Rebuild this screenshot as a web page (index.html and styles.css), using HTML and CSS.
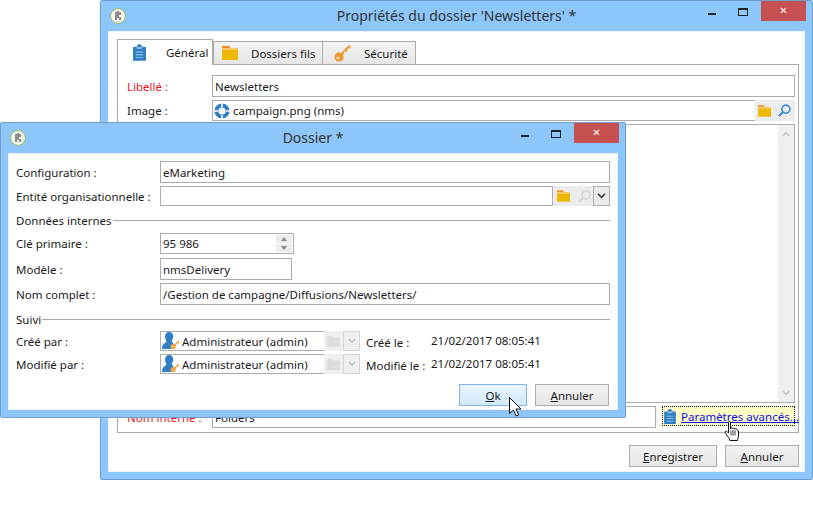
FILE: index.html
```html
<!DOCTYPE html>
<html lang="fr">
<head>
<meta charset="utf-8">
<title>Dossier</title>
<link rel="stylesheet" href="styles.css">
</head>
<body>
<svg class="defs" width="0" height="0" aria-hidden="true">
  <defs>
    <symbol id="clip" viewBox="0 0 14 18">
      <path d="M0 3h4V1.5h1.5V0h3v1.5H10V3h4v15H0z" fill="#2f7fc6"/>
      <path d="M4 3h6v2H4z" fill="#8fc0ea"/>
      <path d="M3 8h8v1H3zM3 11h8v1H3zM3 14h8v1H3z" fill="#a9d0f0"/>
    </symbol>
    <symbol id="folder" viewBox="0 0 16 14">
      <path d="M0 0h8v2H0z" fill="#f28c1e"/>
      <path d="M0 2h16v2H0z" fill="#f6c86a"/>
      <path d="M0 4h16v10H0z" fill="#efb800"/>
    </symbol>
    <symbol id="greyfolder" viewBox="0 0 16 14">
      <path d="M0 0h7v2h9v12H0z" fill="#dcdcdc"/>
    </symbol>
    <symbol id="key" viewBox="0 0 18 18">
      <circle cx="5" cy="13" r="4.6" fill="#ee9a2e"/>
      <circle cx="4" cy="14" r="1.3" fill="#f5f5f5"/>
      <path d="M6 10 15 1l2 2-2 2-1-1-1 1 1 1-2 2-1-1-2 4z" fill="#ee9a2e"/>
    </symbol>
    <symbol id="lens" viewBox="0 0 14 14">
      <circle cx="8.5" cy="5.5" r="4.3" fill="none" stroke="currentColor" stroke-width="1.8"/>
      <path d="M5.6 8.4 1 13" stroke="currentColor" stroke-width="2.4" fill="none"/>
    </symbol>
    <symbol id="chev" viewBox="0 0 10 7">
      <path d="M1 1l4 4 4-4" fill="none" stroke="currentColor" stroke-width="2"/>
    </symbol>
    <symbol id="user" viewBox="0 0 18 18">
      <path d="M7 0c3 0 4.500 2 4.200 5-.2 2-1 3.200-1.500 4 .3 1 1 1.500 1.800 2L9 17H0c0-3.500 1-5 3-6 .8-.5 1.200-1 1.300-2C3.400 7.500 3 6 3 4.500 3 2 4.500 0 7 0z" fill="#2f7fc6"/>
      <circle cx="11" cy="14.500" r="2.600" fill="#ee9a2e"/>
      <circle cx="10.800" cy="14.800" r=".8" fill="#fff"/>
      <path d="M12 13l4-4 1.500 1.500-1 1-1-.5-.5 1-1 .5-1 2z" fill="#ee9a2e"/>
    </symbol>
    <symbol id="logo" viewBox="0 0 16 16">
      <circle cx="8" cy="8" r="7.400" fill="#f4f6ee" stroke="#9dbb5c" stroke-width="1"/>
      <path d="M6 4v8M8 3v7M10 4v3M10 9v3" stroke="#555" stroke-width="1.300" fill="none"/>
    </symbol>
  </defs>
</svg>

<section class="win win-main">
  <header class="titlebar">
    <svg class="logo"><use href="#logo"/></svg>
    <h1 class="title">Propriétés du dossier 'Newsletters' *</h1>
    <div class="controls">
      <span class="ctl-min"></span>
      <span class="ctl-max"></span>
      <span class="ctl-close">✕</span>
    </div>
  </header>
  <div class="client client-main">
    <nav class="tabs">
      <div class="tab tab-active"><svg class="tab-ico"><use href="#clip"/></svg><span>Général</span></div>
      <div class="tab tab-2"><svg class="tab-ico-f"><use href="#folder"/></svg><span>Dossiers fils</span></div>
      <div class="tab tab-3"><svg class="tab-ico-k"><use href="#key"/></svg><span>Sécurité</span></div>
    </nav>
    <div class="panel">
      <div class="mrow mrow-libelle">
        <label class="mlabel req">Libellé :</label>
        <div class="field grow">Newsletters</div>
      </div>
      <div class="mrow mrow-image">
        <label class="mlabel">Image :</label>
        <div class="field grow field-ico"><svg class="camp" viewBox="0 0 16 16"><circle cx="8" cy="8" r="5.600" fill="none" stroke="#2f7fc6" stroke-width="4"/><path d="M8 0v4M8 12v4M0 8h4M12 8h4" stroke="#fff" stroke-width="1.600"/></svg>campaign.png (nms)</div>
        <div class="iconbtns">
          <svg class="ib-f"><use href="#folder"/></svg>
          <svg class="ib-l lens-blue"><use href="#lens"/></svg>
        </div>
      </div>
      <div class="bigbox">
        <div class="scroll">
          <svg class="sc-up"><use href="#chev"/></svg>
          <svg class="sc-down"><use href="#chev"/></svg>
        </div>
      </div>
      <div class="mrow mrow-nom">
        <label class="mlabel req">Nom interne :</label>
        <div class="field grow">Folders</div>
        <div class="advanced">
          <svg class="adv-ico"><use href="#clip"/></svg>
          <a class="adv-link" href="#">Paramètres avancés...</a>
        </div>
      </div>
    </div>
    <footer class="actions actions-main">
      <button class="btn btn-save"><u>E</u>nregistrer</button>
      <button class="btn btn-cancel"><u>A</u>nnuler</button>
    </footer>
  </div>
</section>

<section class="win win-dlg">
  <header class="titlebar">
    <svg class="logo"><use href="#logo"/></svg>
    <h1 class="title title-dlg">Dossier *</h1>
    <div class="controls">
      <span class="ctl-min"></span>
      <span class="ctl-max"></span>
      <span class="ctl-close">✕</span>
    </div>
  </header>
  <div class="client client-dlg">
    <div class="drow r-conf">
      <label class="dlabel">Configuration :</label>
      <div class="field grow">eMarketing</div>
    </div>
    <div class="drow r-ent">
      <label class="dlabel">Entité organisationnelle :</label>
      <div class="field grow"></div>
      <div class="iconbtns ib-ent">
        <svg class="ib-f"><use href="#folder"/></svg>
        <svg class="ib-l lens-grey"><use href="#lens"/></svg>
      </div>
      <div class="dropbtn"><svg class="drop-chev"><use href="#chev"/></svg></div>
    </div>
    <div class="legend leg-1"><span>Données internes</span><i></i></div>
    <div class="drow r-cle">
      <label class="dlabel">Clé primaire :</label>
      <div class="field spin">95 986
        <div class="spinbtns">
          <span class="spin-b"><b class="arrow-up"></b></span>
          <span class="spin-b"><b class="arrow-down"></b></span>
        </div>
      </div>
    </div>
    <div class="drow r-mod">
      <label class="dlabel">Modèle :</label>
      <div class="field model">nmsDelivery</div>
    </div>
    <div class="drow r-nom">
      <label class="dlabel">Nom complet :</label>
      <div class="field grow">/Gestion de campagne/Diffusions/Newsletters/</div>
    </div>
    <div class="legend leg-2"><span>Suivi</span><i></i></div>
    <div class="drow r-cree">
      <label class="dlabel">Créé par :</label>
      <div class="field user"><svg class="user-ico"><use href="#user"/></svg>Administrateur (admin)</div>
      <div class="userbtns">
        <span class="ub-f"><svg class="ub-folder"><use href="#greyfolder"/></svg></span>
        <span class="ub-c"><svg class="ub-chev"><use href="#chev"/></svg></span>
      </div>
      <label class="datel">Créé le :</label>
      <span class="dateval">21/02/2017 08:05:41</span>
    </div>
    <div class="drow r-modif">
      <label class="dlabel">Modifié par :</label>
      <div class="field user"><svg class="user-ico"><use href="#user"/></svg>Administrateur (admin)</div>
      <div class="userbtns">
        <span class="ub-f"><svg class="ub-folder"><use href="#greyfolder"/></svg></span>
        <span class="ub-c"><svg class="ub-chev"><use href="#chev"/></svg></span>
      </div>
      <label class="datel">Modifié le :</label>
      <span class="dateval">21/02/2017 08:05:41</span>
    </div>
    <footer class="actions actions-dlg">
      <button class="btn btn-ok"><u>O</u>k</button>
      <button class="btn btn-cancel2"><u>A</u>nnuler</button>
    </footer>
  </div>
</section>

<svg class="cursor cur-arrow" viewBox="0 0 13 20"><path d="M.5.500v16l4-3.500 2.700 6 2.500-1-2.700-6H12z" fill="#fff" stroke="#111" stroke-width="1"/></svg>
<svg class="cursor cur-hand" viewBox="0 0 17 21"><path d="M4.500 1.500c0-1.300 2-1.300 2 0V8l.5-.8c.5-.7 2-.5 2 .5.500-.8 2-.6 2 .5.600-.7 2-.5 2 .5l.5.300c.8.500 1 1 1 2v4c0 1.500-1 2.500-1 4.500H6c-.5-2-2-3.500-4-6.500-1.200-1.800-.8-3 0-3 .8 0 1.700 1.200 2.500 2z" fill="#fff" stroke="#111" stroke-width="1"/><path d="M7 9.500v5M9 9v5.500M11 9.500v5" stroke="#111" stroke-width=".8" fill="none"/></svg>
</body>
</html>
```
FILE: styles.css
```css
* { box-sizing: border-box; }
html, body { margin: 0; padding: 0; }
body {
  width: 813px;
  height: 514px;
  position: relative;
  overflow: hidden;
  background: #fff;
  font-family: "Noto Sans", "Open Sans", sans-serif;
  font-size: 11.5px;
  color: #1a1a1a;
}
.defs { position: absolute; }

.win {
  position: absolute;
  display: flex;
  flex-direction: column;
  background: #8cc6fa;
  border: 1px solid #6e9fcb;
  border-radius: 2px;
  padding: 0 7px 7px;
}
.win-main { left: 100px; top: 0; width: 713px; height: 480px; }
.win-dlg { left: 0; top: 122px; width: 626px; height: 296px; }

.titlebar {
  position: relative;
  flex: none;
  height: 30px;
  display: flex;
  align-items: center;
  justify-content: center;
}
.logo { position: absolute; left: 2px; top: 7px; width: 16px; height: 16px; }
.title {
  margin: 0;
  font-size: 14px;
  font-weight: 400;
  color: #333;
  line-height: 1;
  padding-bottom: 1px;
}
.controls {
  position: absolute;
  right: -1px;
  top: 0;
  display: flex;
  height: 20px;
}
.ctl-min { width: 8px; height: 2px; background: #222; margin: 12px 22px 0 0; }
.ctl-max { width: 10px; height: 8px; border: 1px solid #222; border-top-width: 2px; margin: 7px 13px 0 0; }
.ctl-close {
  width: 45px;
  height: 20px;
  background: #c75050;
  color: #fff;
  font-size: 10px;
  font-weight: 700;
  line-height: 20px;
  text-align: center;
  font-family: "DejaVu Sans", sans-serif;
}

.client {
  flex: 1;
  min-height: 0;
  display: flex;
  flex-direction: column;
  background: #fff;
  border: 1px solid #f0f0f0;
}
.client-main { padding: 7px 5px 5px 8px; }

.tabs { display: flex; align-items: flex-end; height: 25px; flex: none; position: relative; z-index: 1; }
.tab {
  display: flex;
  align-items: center;
  height: 23px;
  background: linear-gradient(#f3f3f3, #e6e6e6);
  border: 1px solid #acacac;
  border-bottom: none;
  margin-right: 0;
  color: #1a1a1a;
}
.tab-active { width: 96px; height: 26px; margin-bottom: -1px; background: #fff; padding-left: 15px; }
.tab-2 { width: 110px; padding-left: 8px; border-left-width: 1px; }
.tab-3 { width: 94px; padding-left: 11px; margin-left: -1px; }
.tab-ico { width: 13px; height: 17px; margin-right: 20px; }
.tab-ico-f { width: 16px; height: 14px; margin-right: 13px; }
.tab-ico-k { width: 18px; height: 18px; margin-right: 12px; }

.panel {
  flex: none;
  height: 369px;
  border: 1px solid #acacac;
  padding: 10px 3px 4px 9px;
  display: flex;
  flex-direction: column;
}
.mrow { display: flex; align-items: center; flex: none; }
.mrow-libelle { height: 22px; }
.mrow-image { height: 21px; margin-top: 3px; }
.mrow-nom { height: 22px; margin-top: 3px; }
.mlabel { width: 85px; flex: none; }
.req { color: #f0141e; }
.field {
  height: 100%;
  border: 1px solid #acacac;
  background: #fff;
  display: flex;
  align-items: center;
  padding-left: 2px;
  white-space: nowrap;
  min-width: 0;
}
.grow { flex: 1; }
.field-ico { gap: 3px; padding-left: 1px; border-right: none; }
.camp { width: 16px; height: 16px; flex: none; }
.iconbtns {
  flex: none;
  width: 40px;
  height: 100%;
  background: #ececec;
  display: flex;
  align-items: center;
  gap: 7px;
  padding-left: 3px;
}
.ib-f { width: 13px; height: 12px; flex: none; }
.ib-l { width: 13px; height: 13px; flex: none; }
.lens-blue { color: #3f8ddb; }
.lens-grey { color: #d6d6d6; }

.bigbox {
  flex: 1;
  margin: 3px 0 0 85px;
  border: 1px solid #acacac;
  display: flex;
  justify-content: flex-end;
}
.scroll {
  width: 16px;
  background: #efefef;
  display: flex;
  flex-direction: column;
  justify-content: space-between;
  align-items: center;
  color: #c4c4c4;
  padding: 6px 0;
}
.sc-up { width: 8px; height: 6px; transform: rotate(180deg); }
.sc-down { width: 8px; height: 6px; }

.advanced {
  flex: none;
  width: 133px;
  height: 20px;
  margin-left: 6px;
  align-self: flex-start;
  border: 1px dotted #111;
  background: #ffffc4;
  display: flex;
  align-items: center;
  padding-left: 1px;
  gap: 5px;
}
.adv-ico { width: 12px; height: 15px; flex: none; }
.adv-link { color: #0a0aee; white-space: nowrap; }

.actions { display: flex; justify-content: flex-end; flex: none; }
.actions-main { margin-top: 12px; gap: 8px; padding-right: 0; }
.btn {
  font: inherit;
  height: 22px;
  padding: 0;
  border: 1px solid #acacac;
  background: linear-gradient(#f2f2f2, #e6e6e6);
  color: #1a1a1a;
}
.btn-save { width: 88px; }
.btn-cancel { width: 74px; }
.btn-ok { width: 68px; background: linear-gradient(#eaf5fe, #d3e9fb); border-color: #7eb4ea; }
.btn-cancel2 { width: 74px; }

.client-dlg { padding: 7px 7px 4px 7px; }
.drow { display: flex; align-items: center; flex: none; }
.dlabel { width: 144px; flex: none; white-space: nowrap; }
.r-conf { height: 22px; }
.r-ent { height: 20px; margin-top: 3px; }
.legend { display: flex; align-items: center; gap: 1px; flex: none; height: 14px; }
.legend i { flex: 1; height: 1px; background: #a9a9a9; }
.leg-1 { margin-top: 7px; }
.r-cle { height: 21px; margin-top: 6px; }
.r-mod { height: 22px; margin-top: 4px; }
.r-nom { height: 22px; margin-top: 3px; }
.leg-2 { margin-top: 7px; }
.r-cree { height: 20px; margin-top: 5px; }
.r-modif { height: 20px; margin-top: 3px; }

.ib-ent { width: 40px; gap: 8px; padding-left: 4px; }
.dropbtn {
  flex: none;
  width: 17px;
  height: 100%;
  border: 1px solid #acacac;
  background: #ececec;
  color: #444;
  display: flex;
  align-items: center;
  justify-content: center;
}
.drop-chev { width: 9px; height: 6px; }

.spin { width: 134px; position: relative; justify-content: space-between; padding-right: 0; }
.spinbtns { display: flex; flex-direction: column; gap: 1px; margin-right: 1px; width: 16px; }
.spin-b { height: 8px; background: #ececec; display: flex; align-items: center; justify-content: center; }
.arrow-up { border: 3px solid transparent; border-top: 0; border-bottom: 4px solid #8a8a8a; }
.arrow-down { border: 3px solid transparent; border-bottom: 0; border-top: 4px solid #8a8a8a; }
.model { width: 132px; }

.user { width: 164px; gap: 2px; padding-left: 1px; border-right: none; }
.user-ico { width: 18px; height: 18px; flex: none; }
.userbtns { display: flex; height: 100%; flex: none; width: 36px; }
.ub-f { width: 19px; background: #efefef; display: flex; align-items: center; justify-content: center; }
.ub-folder { width: 13px; height: 11px; }
.ub-c { width: 17px; border: 1px solid #d6d6d6; background: #efefef; color: #c4c4c4; display: flex; align-items: center; justify-content: center; }
.ub-chev { width: 8px; height: 6px; }
.datel { width: 65px; margin-left: 6px; flex: none; white-space: nowrap; padding-top: 2px; }
.dateval { white-space: nowrap; padding-bottom: 2px; }

.actions-dlg { margin-top: 10px; gap: 8px; padding-right: 1px; }

.cursor { position: absolute; overflow: visible; }
.cur-arrow { left: 509px; top: 397px; width: 13px; height: 20px; }
.cur-hand { left: 724px; top: 421px; width: 17px; height: 21px; }
```
